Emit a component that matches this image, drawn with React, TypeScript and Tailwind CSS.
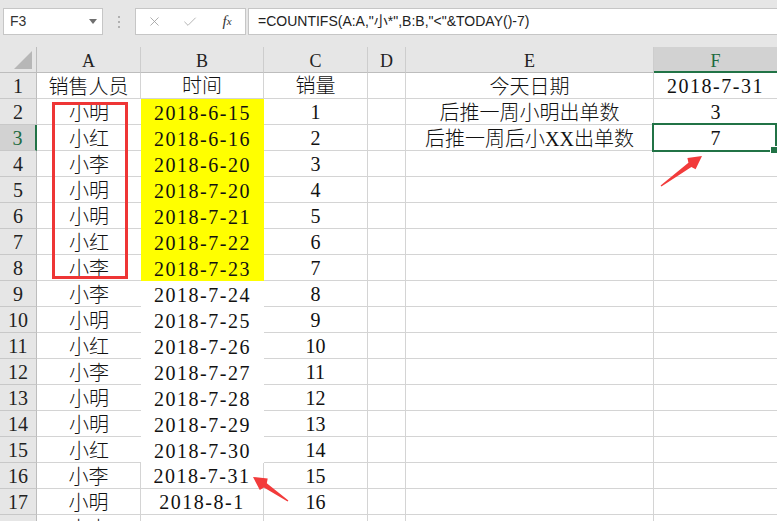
import React from 'react';
import { X, Check } from 'lucide-react';

const names = ['小明','小红','小李','小明','小明','小红','小李','小李','小明','小红','小李','小明','小明','小红','小李','小明','小李'];
const dates = ['2018-6-15','2018-6-16','2018-6-20','2018-7-20','2018-7-21','2018-7-22','2018-7-23','2018-7-24','2018-7-25','2018-7-26','2018-7-27','2018-7-28','2018-7-29','2018-7-30','2018-7-31','2018-8-1',''];

const cellFont = "font-['Liberation_Serif','Noto_Sans_CJK_SC',serif] font-light text-[20px] leading-none text-[#111]";

function arrowPoints(tip: [number, number], tail: [number, number]) {
  const dx = tip[0] - tail[0];
  const dy = tip[1] - tail[1];
  const len = Math.hypot(dx, dy);
  const ux = dx / len, uy = dy / len;
  const nx = -uy, ny = ux;
  const H = 15, W = 7, w1 = 2.6, w0 = 0.7;
  const neck = [tip[0] - ux * H, tip[1] - uy * H];
  const pts = [
    [tail[0] + nx * w0, tail[1] + ny * w0],
    [neck[0] + nx * w1, neck[1] + ny * w1],
    [neck[0] + nx * W + ux * 2, neck[1] + ny * W + uy * 2],
    tip,
    [neck[0] - nx * W + ux * 2, neck[1] - ny * W + uy * 2],
    [neck[0] - nx * w1, neck[1] - ny * w1],
    [tail[0] - nx * w0, tail[1] - ny * w0],
  ];
  return pts.map((p) => `${p[0].toFixed(1)},${p[1].toFixed(1)}`).join(' ');
}

function RowHeader({ n }: { n: number }) {
  const sel = n === 3;
  return (
    <div
      className={
        sel
          ? "w-[37px] shrink-0 h-full flex items-center justify-center bg-[#d2d2d2] border-r-2 border-r-[#217346] border-b border-b-[#c8c8c8] font-['Liberation_Serif',serif] text-[20px] leading-none text-[#1e6b40]"
          : "w-[37px] shrink-0 h-full flex items-center justify-center bg-[#e6e6e6] border-r border-r-[#bdbdbd] border-b border-b-[#c8c8c8] font-['Liberation_Serif',serif] text-[20px] leading-none text-[#222]"
      }
    >
      {n}
    </div>
  );
}

function Row({ n }: { n: number }) {
  const i = n - 2;
  const a = n === 1 ? '销售人员' : names[i];
  const b = n === 1 ? '时间' : dates[i];
  const c = n === 1 ? '销量' : n === 18 ? '' : String(n - 1);
  const e = n === 1 ? '今天日期' : n === 2 ? '后推一周小明出单数' : n === 3 ? '后推一周后小XX出单数' : '';
  const f = n === 1 ? '2018-7-31' : n === 2 ? '3' : n === 3 ? '7' : '';
  const yellow = n >= 2 && n <= 8;
  const white = n >= 9 && n <= 15;
  const noAR = yellow || white;
  const isDateB = n !== 1;
  return (
    <div className="flex h-[26px]">
      <RowHeader n={n} />
      <div
        className={
          noAR
            ? `w-[104px] shrink-0 h-full flex items-center justify-center border-b border-b-[#d4d4d4] pt-[2px] ${cellFont}`
            : `w-[104px] shrink-0 h-full flex items-center justify-center border-r border-r-[#d4d4d4] border-b border-b-[#d4d4d4] pt-[2px] ${cellFont}`
        }
      >
        {a}
      </div>
      <div
        className={
          yellow
            ? `w-[123px] shrink-0 h-full flex items-center justify-center bg-[#ffff00] pt-[1px] ${cellFont}`
            : white
            ? `w-[123px] shrink-0 h-full flex items-center justify-center bg-white pt-[1px] ${cellFont}`
            : `w-[123px] shrink-0 h-full flex items-center justify-center border-r border-r-[#d4d4d4] border-b border-b-[#d4d4d4] pt-[1px] ${cellFont}`
        }
      >
        <span className={isDateB ? 'tracking-[1.5px]' : ''}>{b}</span>
      </div>
      <div className={`w-[104px] shrink-0 h-full flex items-center justify-center border-r border-r-[#d4d4d4] border-b border-b-[#d4d4d4] pt-[1px] ${cellFont}`}>
        {c}
      </div>
      <div className="w-[38px] shrink-0 h-full border-r border-r-[#d4d4d4] border-b border-b-[#d4d4d4]" />
      <div className={`w-[248px] shrink-0 h-full flex items-center justify-center border-r border-r-[#d4d4d4] border-b border-b-[#d4d4d4] pt-[2px] whitespace-nowrap ${cellFont}`}>
        {e}
      </div>
      <div className={`relative flex-1 h-full flex items-center justify-center border-b border-b-[#d4d4d4] pt-[1px] ${cellFont}`}>
        <span className={n === 1 ? 'tracking-[1.5px]' : ''}>{f}</span>
        {n === 3 && (
          <div className="absolute -left-[2px] -top-[2px] -bottom-[2px] right-0 border-2 border-[#217346]">
            <div className="absolute -right-[2px] -bottom-[3px] w-[6px] h-[6px] bg-[#217346] outline outline-1 outline-white" />
          </div>
        )}
      </div>
    </div>
  );
}

export default function App() {
  const rows = Array.from({ length: 18 }, (_, k) => k + 1);
  return (
    <div className="relative w-[777px] h-[521px] overflow-hidden bg-white">
      {/* formula bar */}
      <div className="h-[47px] bg-[#e6e6e6] flex items-start pt-[8px] pl-[3px]">
        <div className="w-[100px] h-[27px] bg-white border border-[#c6c6c6] flex items-center justify-between pl-[6px] pr-[5px]">
          <span className="font-['Liberation_Sans',sans-serif] text-[14px] text-[#333]">F3</span>
          <svg width="8" height="5" viewBox="0 0 8 5"><path d="M0 0 L8 0 L4 5 Z" fill="#6f6f6f" /></svg>
        </div>
        <div className="w-[32px] h-[27px] flex flex-col items-center justify-center gap-[3px]">
          <div className="w-[2px] h-[2px] bg-[#b0b0b0]" />
          <div className="w-[2px] h-[2px] bg-[#b0b0b0]" />
          <div className="w-[2px] h-[2px] bg-[#b0b0b0]" />
        </div>
        <div className="w-[111px] h-[27px] bg-white border border-[#c6c6c6] flex items-center">
          <div className="w-[34px] flex justify-center ml-[1px]"><X size={15} strokeWidth={1.3} color="#9c9c9c" /></div>
          <div className="w-[38px] flex justify-center"><Check size={16} strokeWidth={1.3} color="#a8a8a8" /></div>
          <div className="w-[36px] flex justify-center font-['Liberation_Serif',serif] italic text-[15px] text-[#333] leading-none">
            f<span className="text-[11px] relative top-[2px]">x</span>
          </div>
        </div>
        <div className="flex-1 ml-[2px] h-[27px] bg-white border border-r-0 border-[#c6c6c6] flex items-center pl-[9px] font-['Liberation_Sans','Noto_Sans_CJK_SC',sans-serif] text-[14px] text-[#222] whitespace-nowrap">
          =COUNTIFS(A:A,"小*",B:B,"&lt;"&amp;TODAY()-7)
        </div>
      </div>

      {/* column header */}
      <div className="flex h-[26px] bg-[#e6e6e6] font-['Liberation_Serif',serif] text-[18px] leading-none text-[#222]">
        <div className="w-[37px] shrink-0 h-full border-r border-r-[#bdbdbd] border-b border-b-[#bdbdbd] relative">
          <svg className="absolute left-0 top-0" width="36" height="25" viewBox="0 0 36 25">
            <path d="M32 4 L32 22 L14 22 Z" fill="#b7b7b7" />
          </svg>
        </div>
        <div className="w-[104px] shrink-0 h-full flex items-center justify-center border-r border-r-[#cdcdcd] border-b border-b-[#bdbdbd] pt-[2px]">A</div>
        <div className="w-[123px] shrink-0 h-full flex items-center justify-center border-r border-r-[#cdcdcd] border-b border-b-[#bdbdbd] pt-[2px]">B</div>
        <div className="w-[104px] shrink-0 h-full flex items-center justify-center border-r border-r-[#cdcdcd] border-b border-b-[#bdbdbd] pt-[2px]">C</div>
        <div className="w-[38px] shrink-0 h-full flex items-center justify-center border-r border-r-[#cdcdcd] border-b border-b-[#bdbdbd] pt-[2px]">D</div>
        <div className="w-[248px] shrink-0 h-full flex items-center justify-center border-r border-r-[#cdcdcd] border-b border-b-[#bdbdbd] pt-[2px]">E</div>
        <div className="flex-1 h-full flex items-center justify-center bg-[#d2d2d2] border-b-2 border-b-[#217346] pt-[3px] text-[#1e6b40]">F</div>
      </div>

      {rows.map((n) => (
        <Row key={n} n={n} />
      ))}

      {/* annotations */}
      <div className="absolute left-[52px] top-[102px] w-[76px] h-[177px] border-[3px] border-[#ee3535] pointer-events-none" />
      <svg className="absolute inset-0 pointer-events-none" width="777" height="521">
        <polygon points={arrowPoints([702, 156], [661, 186])} fill="#f23b3b" />
        <polygon points={arrowPoints([253, 477], [288, 501])} fill="#f23b3b" />
      </svg>
    </div>
  );
}
